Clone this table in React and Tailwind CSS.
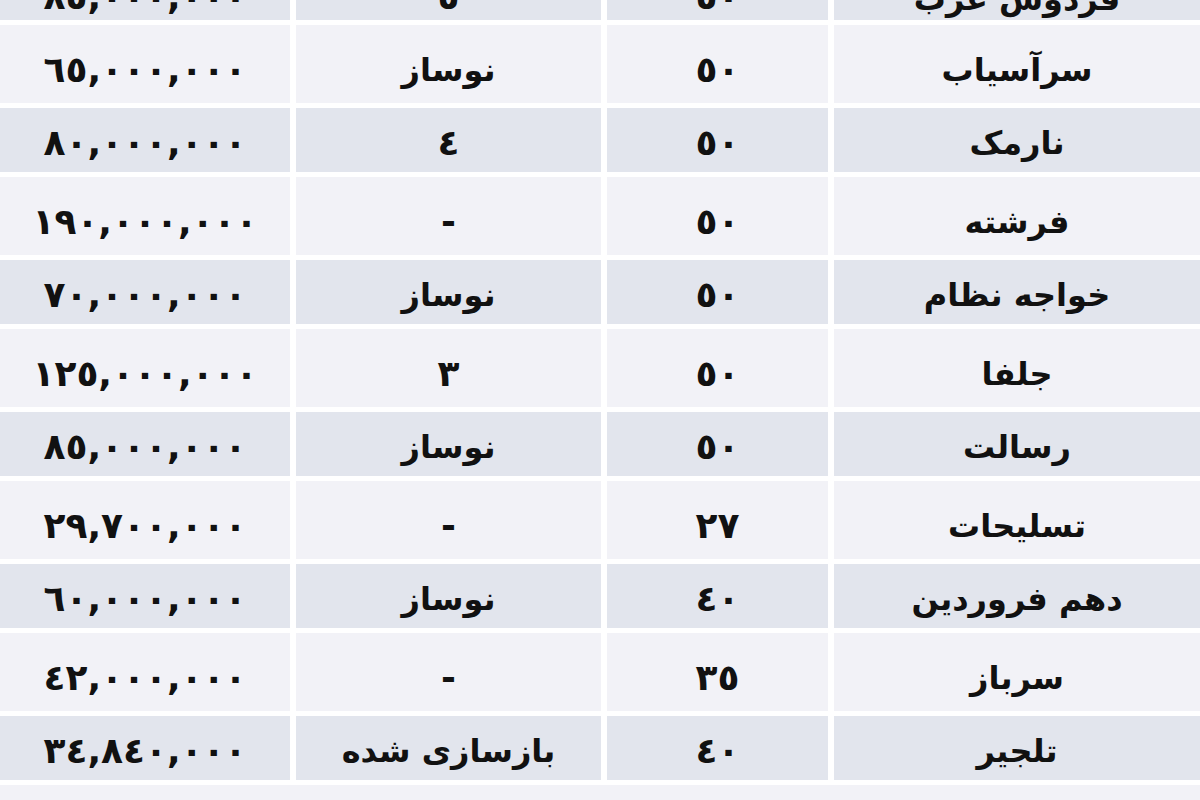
import React from "react";

const rows = [
  { price: "٨٥,٠٠٠,٠٠٠", status: "٥", count: "٥٠", name: "فردوس غرب" },
  { price: "٦٥,٠٠٠,٠٠٠", status: "نوساز", count: "٥٠", name: "سرآسیاب" },
  { price: "٨٠,٠٠٠,٠٠٠", status: "٤", count: "٥٠", name: "نارمک" },
  { price: "١٩٠,٠٠٠,٠٠٠", status: "-", count: "٥٠", name: "فرشته" },
  { price: "٧٠,٠٠٠,٠٠٠", status: "نوساز", count: "٥٠", name: "خواجه نظام" },
  { price: "١٢٥,٠٠٠,٠٠٠", status: "٣", count: "٥٠", name: "جلفا" },
  { price: "٨٥,٠٠٠,٠٠٠", status: "نوساز", count: "٥٠", name: "رسالت" },
  { price: "٢٩,٧٠٠,٠٠٠", status: "-", count: "٢٧", name: "تسلیحات" },
  { price: "٦٠,٠٠٠,٠٠٠", status: "نوساز", count: "٤٠", name: "دهم فروردین" },
  { price: "٤٢,٠٠٠,٠٠٠", status: "-", count: "٣٥", name: "سرباز" },
  { price: "٣٤,٨٤٠,٠٠٠", status: "بازسازی شده", count: "٤٠", name: "تلجیر" },
];

const isNum = (s) => /^[٠-٩,\-]+$/.test(s);

function Row({ r, gray, h, top }) {
  const bg = gray ? "bg-[#e2e5ed]" : "bg-[#f2f2f7]";
  const pad = top ? "items-end pb-[5px]" : gray ? "items-center pt-[6px]" : "items-center pt-[12px]";
  const cell = `flex justify-center ${pad} ${bg} overflow-hidden`;
  const txt = (s) => (isNum(s) ? "text-[36px] leading-none" : "text-[32px] leading-none");
  return (
    <div dir="rtl" className="grid grid-cols-[366px_221px_305px_290px] gap-x-[6px] bg-white" style={{ height: h }}>
      <div className={cell}><span className={txt(r.name)}>{r.name}</span></div>
      <div className={cell}><span className={txt(r.count)}>{r.count}</span></div>
      <div className={cell}><span className={txt(r.status)}>{r.status}</span></div>
      <div className={cell}><span dir="ltr" className={txt(r.price)}>{r.price}</span></div>
    </div>
  );
}

export default function App() {
  return (
    <div
      className="w-[1200px] h-[800px] overflow-hidden bg-white flex flex-col gap-y-[5px] font-bold text-[#111]"
      style={{ fontFamily: '"DejaVu Sans", sans-serif' }}
    >
      <div className="h-[20px] shrink-0 overflow-hidden">
        <Row r={rows[0]} gray h={20} top />
      </div>
      {rows.slice(1).map((r, i) => (
        <div key={i} className="shrink-0">
          <Row r={r} gray={i % 2 === 1} h={i % 2 === 1 ? 64 : 78} />
        </div>
      ))}
      <div className="h-[20px] shrink-0 bg-[#f2f2f7]"></div>
    </div>
  );
}
